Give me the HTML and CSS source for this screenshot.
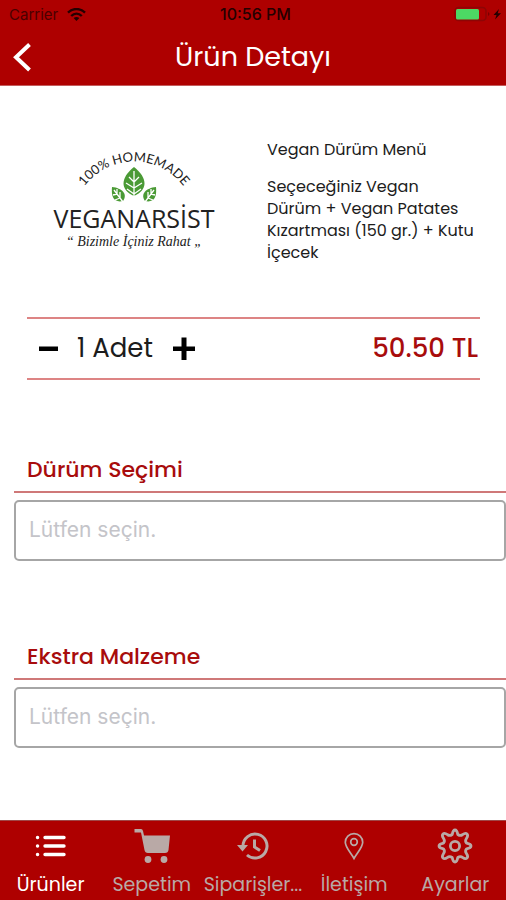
FILE: index.html
```html
<!DOCTYPE html>
<html lang="tr">
<head>
<meta charset="utf-8">
<meta name="viewport" content="width=device-width, initial-scale=1">
<title>Ürün Detayı</title>
<link rel="stylesheet" href="styles.css">
</head>
<body>
<header class="header">
  <div class="status">
    <span class="carrier">Carrier
      <svg width="19" height="13" viewBox="0 0 19 13" fill="none" stroke="currentColor" stroke-width="2.4"><path d="M1 4.7C6-.2 13-.2 18 4.7M4.2 8C7.300 5 11.700 5 14.800 8"/><path d="M9.500 13 6.600 10.100Q9.500 7.800 12.400 10.100Z" fill="currentColor" stroke="none"/></svg>
    </span>
    <span class="clock">10:56 PM</span>
    <svg class="battery" width="48" height="16" viewBox="0 0 48 16"><rect x="1" y="1.500" width="31" height="13" rx="3.500" fill="none" stroke="#8d0505" stroke-width="1.500"/><rect x="2" y="3" width="23" height="10.500" rx="1.500" fill="#4cd964"/><path d="M34 6q3 2 0 4z" fill="#7a0000"/><path d="M45 3 39.500 9h3L41 13.500 47 7.300h-3.300z" fill="#240000"/></svg>
  </div>
  <div class="titlebar">
    <button class="back" type="button" aria-label="Geri"><svg width="20" height="30" viewBox="0 0 20 30" fill="none" stroke="#fff" stroke-width="4"><path d="M17.500 2.500 4 15.300 17.500 28"/></svg></button>
    <h1>Ürün Detayı</h1>
  </div>
</header>

<main class="content">
  <section class="product">
    <svg class="logo" viewBox="0 0 190 120" role="img" aria-label="Veganarsist">
      <path id="arc" d="M39 56A62 62 0 0 1 149 56" fill="none"/>
      <text class="logo-arc"><textPath href="#arc" startOffset="50%" text-anchor="middle">100% HOMEMADE</textPath></text>
      <g fill="#4a9a35">
        <path d="M94 28C80 39 80 51 94 57C108 51 108 39 94 28Z"/>
        <path d="M72 48C71 58 74 64 83 62C88 55 82 49 72 48Z"/>
        <path d="M116 48C117 58 114 64 105 62C100 55 106 49 116 48Z"/>
      </g>
      <g fill="none" stroke="#fff" stroke-width="1.300">
        <path d="M94 32V57M94 43 89 38M94 43 99 38M94 49 86 44M94 49 102 44M94 55 87 50M94 55 101 50"/>
        <path d="M74 51 83 63M77 55V50M77 55 73 56M80 59V53M80 59 75 61M114 51 105 63M111 55V50M111 55 115 56M108 59V53M108 59 113 61"/>
      </g>
      <text class="logo-name" x="94" y="89" text-anchor="middle">VEGANARSİST</text>
      <text class="logo-tag" x="94" y="107" text-anchor="middle">“ Bizimle İçiniz Rahat „</text>
    </svg>
    <div class="info">
      <h2>Vegan Dürüm Menü</h2>
      <p>Seçeceğiniz Vegan Dürüm + Vegan Patates Kızartması (150 gr.) + Kutu İçecek</p>
    </div>
  </section>

  <section class="order">
    <button type="button" class="step" aria-label="Azalt"><svg width="24" height="24" viewBox="0 0 24 24"><path d="M2 9.500h19V14H2z"/></svg></button>
    <span class="amount">1 Adet</span>
    <button type="button" class="step" aria-label="Artır"><svg width="24" height="24" viewBox="0 0 24 24"><path d="M9.500.5h5v9H23V14h-8.500v9h-5v-9H1V9.500h8.500z"/></svg></button>
    <strong class="price">50.50 TL</strong>
  </section>

  <section class="option">
    <label for="durum">Dürüm Seçimi</label>
    <select id="durum"><option>Lütfen seçin.</option></select>
  </section>
  <section class="option">
    <label for="ekstra">Ekstra Malzeme</label>
    <select id="ekstra"><option>Lütfen seçin.</option></select>
  </section>
</main>

<nav class="tabs">
  <a class="tab active" href="#urunler">
    <svg width="36" height="36" viewBox="0 0 36 36" fill="none" stroke="currentColor" stroke-width="3.400" stroke-linecap="round"><path d="M12 9.500h19M12 18h19M12 26.500h19M4.500 9.500h.1M4.500 18h.1M4.500 26.500h.1"/></svg>
    <span>Ürünler</span></a>
  <a class="tab" href="#sepetim">
    <svg width="36" height="36" viewBox="0 0 36 36" fill="currentColor"><path d="M.5 1H7q1.500 0 2 2l1 4.500h26L34.500 22q-.4 3-3.500 3H14q-3 0-3.500-3L7 4.500H.5z"/><circle cx="14" cy="31.500" r="3.400"/><circle cx="30" cy="31.500" r="3.400"/></svg>
    <span>Sepetim</span></a>
  <a class="tab" href="#siparisler">
    <svg width="36" height="36" viewBox="0 0 36 36" fill="none" stroke="currentColor" stroke-width="3"><path d="M8 18A12 12 0 1 1 12 27M19.500 11.500V19l5.500 3.500"/><path d="M2 17H13L7.500 23.500z" fill="currentColor" stroke="none"/></svg>
    <span>Siparişler...</span></a>
  <a class="tab" href="#iletisim">
    <svg width="36" height="36" viewBox="0 0 36 36" fill="none" stroke="currentColor" stroke-width="1.700"><path d="M18 30.500C15 25 9.300 19.500 9.300 14.300A8.700 8.700 0 0 1 26.700 14.300C26.700 19.500 21 25 18 30.500Z"/><circle cx="18" cy="14" r="3.300"/></svg>
    <span>İletişim</span></a>
  <a class="tab" href="#ayarlar">
    <svg width="36" height="36" viewBox="0 0 36 36" fill="none" stroke="currentColor" stroke-width="2.800" stroke-linejoin="round"><path d="M18 2Q20 2 20.800 6.500Q23.500 8.300 25.500 6.600Q28.500 4.500 30 6Q31.500 7.500 29.400 10.500Q27.700 13 29.500 15.200Q34 16 34 18Q34 20 29.500 20.800Q27.700 23 29.400 25.500Q31.500 28.500 30 30Q28.500 31.500 25.500 29.400Q23.500 27.700 20.800 29.500Q20 34 18 34Q16 34 15.200 29.500Q12.500 27.700 10.500 29.400Q7.500 31.500 6 30Q4.500 28.500 6.600 25.500Q8.300 23 6.500 20.800Q2 20 2 18Q2 16 6.500 15.200Q8.300 13 6.600 10.500Q4.500 7.500 6 6Q7.500 4.500 10.500 6.600Q12.500 8.300 15.200 6.500Q16 2 18 2Z"/><circle cx="18" cy="18" r="4.600"/></svg>
    <span>Ayarlar</span></a>
</nav>
</body>
</html>
```
FILE: styles.css
```css
* { box-sizing: border-box; }

body {
  margin: 0;
  min-height: 100vh;
  display: flex;
  flex-direction: column;
  background: #fff;
  color: #1c1c1c;
  font-family: Poppins, Inter, sans-serif;
}

button {
  padding: 0;
  border: 0;
  background: none;
  display: flex;
}

.header { background: #ae0000; border-bottom: 1px solid #c45c5c; }

.status {
  display: grid;
  grid-template-columns: 1fr auto 1fr;
  align-items: center;
  height: 28px;
  padding: 0 4px 0 9px;
  font-family: Inter, sans-serif;
  font-size: 15px;
  color: #240000;
}

.carrier { display: flex; align-items: center; gap: 9px; color: #4a0000; }
.carrier svg { color: #240000; }
.clock { font-size: 16px; font-weight: 500; }
.battery { justify-self: end; }

.titlebar {
  display: grid;
  grid-template-columns: 36px 1fr 36px;
  align-items: center;
  height: 57px;
  color: #fff;
}

.back { padding-left: 12px; }

h1 {
  margin: 0;
  text-align: center;
  font-size: 27px;
  font-weight: 400;
}

.content { flex: 1; }

.product {
  display: grid;
  grid-template-columns: 190px 1fr;
  gap: 37px;
  padding: 53px 30px 0 40px;
}

.logo { width: 100%; }
.logo-arc { font: 400 13px Lato, sans-serif; fill: #222; }
.logo-name { font: 400 25px "Open Sans", sans-serif; fill: #222; }
.logo-tag { font: italic 400 14px "Liberation Serif", serif; fill: #222; }

.info { font-size: 16px; line-height: 22px; }
h2 { margin: 0 0 15px; font-size: 16px; font-weight: 400; }
.info p { margin: 0; }

.order {
  display: flex;
  align-items: center;
  gap: 16px;
  height: 63px;
  margin: 53px 26px 0 27px;
  padding: 0 2px 0 10px;
  border: solid #dd8484;
  border-width: 2px 0;
}

.amount { margin-right: 3px; font-size: 26px; }
.price { margin-left: auto; font-size: 26px; font-weight: 500; color: #a80c0c; }

.option { margin: 74px 0 0 14px; }
.option + .option { margin-top: 80px; }

.option label {
  display: block;
  height: 39px;
  margin-bottom: 7px;
  padding-left: 13px;
  border-bottom: 2px solid #cf7878;
  font-size: 22px;
  font-weight: 500;
  line-height: 32px;
  color: #a80c0c;
}

select {
  display: block;
  appearance: none;
  width: 100%;
  height: 61px;
  padding: 0 13px 2px;
  border: 2px solid #a6a6a6;
  border-radius: 5px;
  background: #fff;
  color: #c4c4c9;
  font: 400 21px Inter, sans-serif;
}

.option + .option label { margin-top: 1px; }

.tabs {
  display: grid;
  grid-template-columns: repeat(5, minmax(0, 1fr));
  height: 80px;
  padding-top: 7px;
  border-top: 1px solid #a04848;
  background: #ae0000;
}

.tab {
  display: flex;
  flex-direction: column;
  align-items: center;
  gap: 8px;
  color: #b9a9a6;
  font-size: 19px;
  line-height: 26px;
  white-space: nowrap;
  text-decoration: none;
}

.tab.active { color: #fff; }
```
